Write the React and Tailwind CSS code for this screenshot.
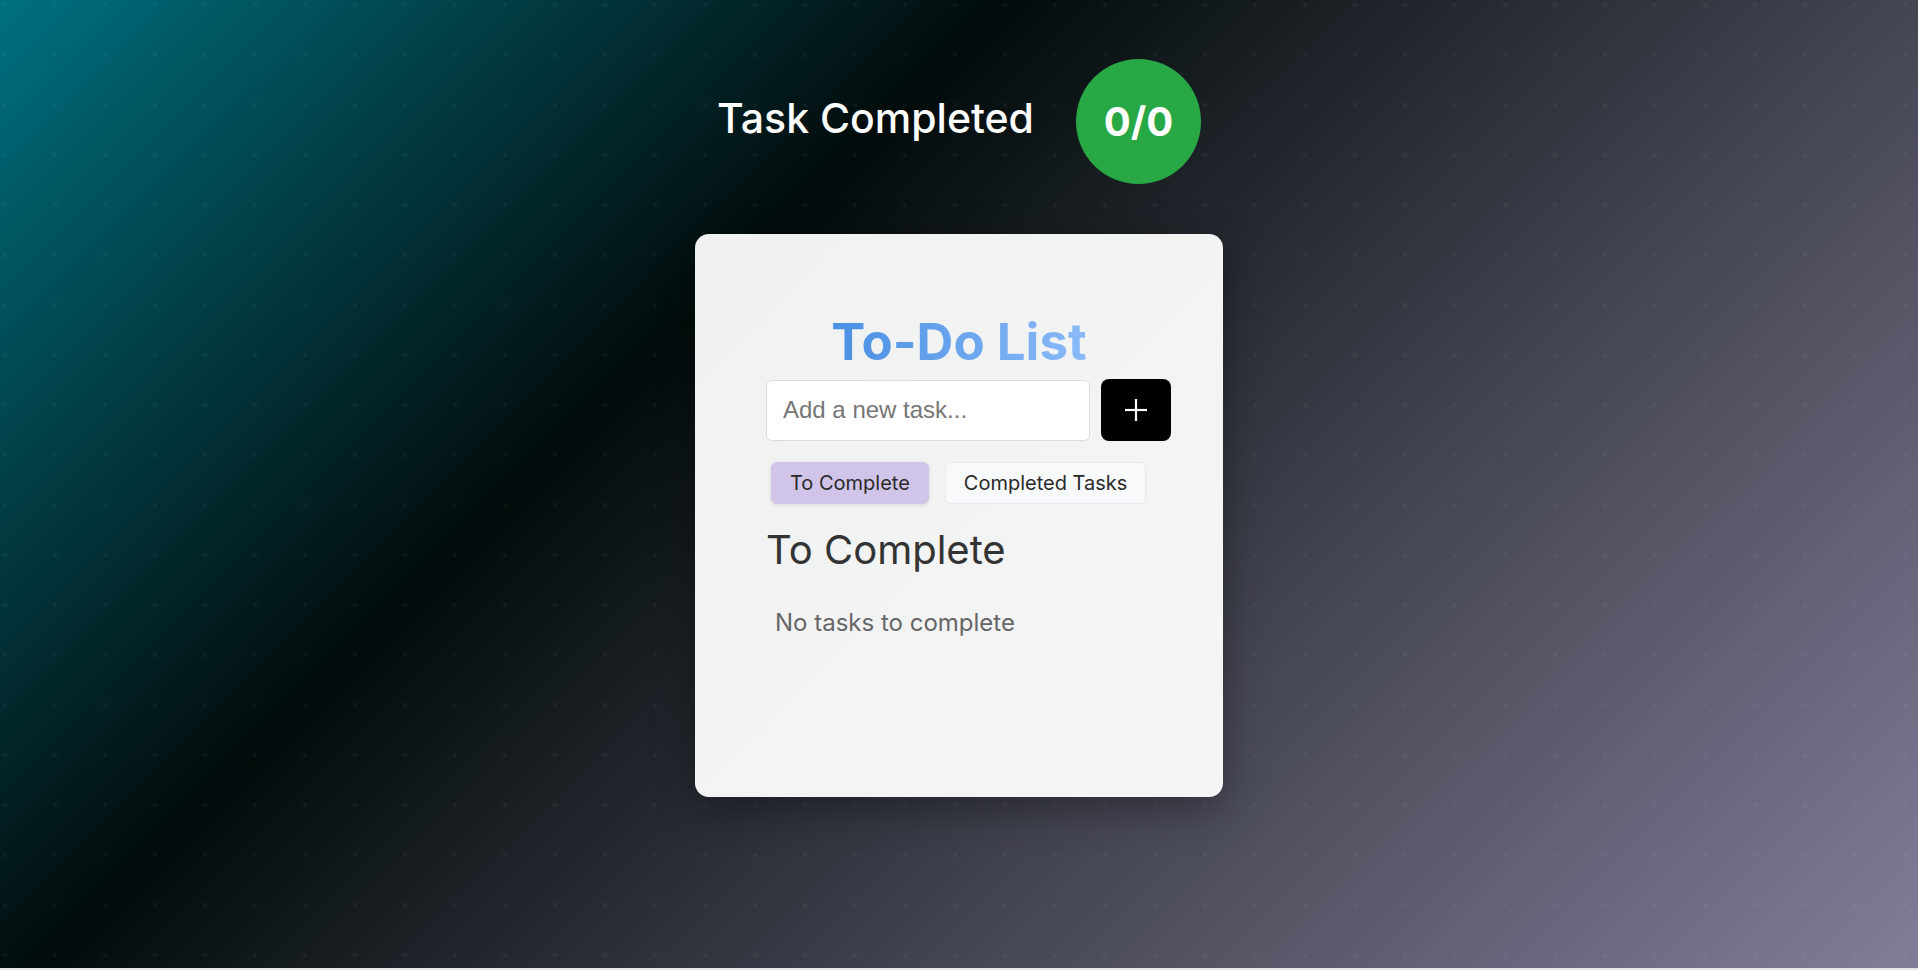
import { useState } from 'react'

function PlusIcon() {
  return (
    <svg width="24" height="24" viewBox="0 0 24 24" fill="none" stroke="white" strokeWidth="2.2" strokeLinecap="butt">
      <line x1="1" y1="12" x2="23" y2="12"/>
      <line x1="12" y1="1" x2="12" y2="23"/>
    </svg>
  )
}

export default function App() {
  const [tab, setTab] = useState('todo')
  const [text, setText] = useState('')
  const tasks = []
  const done = tasks.filter(t => t.done).length

  return (
    <div className="bg-[#e6e6e9] h-[970px] font-['Inter',sans-serif]">
      <div className="h-[968px] flex flex-col items-center bg-[image:radial-gradient(circle,rgba(255,255,255,0.04)_2px,transparent_2.5px),linear-gradient(135deg,#00707f_0%,#030b0b_35%,#41434f_65%,#817d99_100%)] bg-[size:50px_50px,100%_100%] bg-[position:-20px_-20px,0_0]">
        {/* header */}
        <div className="flex items-center gap-[42px] pt-[59px]">
          <h2 className="text-[41px] leading-none font-medium text-white mb-[6px]">Task Completed</h2>
          <div className="w-[125px] h-[125px] rounded-full bg-[#28a745] flex items-center justify-center">
            <span className="text-[40px] leading-none font-bold text-white">{done}/{tasks.length}</span>
          </div>
        </div>

        {/* card */}
        <div className="mt-[50px] w-[528px] h-[563px] rounded-[14px] bg-[linear-gradient(135deg,#f0f1f1,#f5f5f5)] shadow-[0_12px_40px_rgba(0,0,0,0.35)] pt-[82px]">
          <h1 className="text-center text-[51px] leading-none font-bold">
            <span className="bg-[linear-gradient(90deg,#4a8fe3,#8abaf8)] bg-clip-text text-transparent">To-Do List</span>
          </h1>

          <div className="pl-[71px]">
            <div className="flex items-center mt-[12px]">
              <input
                value={text}
                onChange={e => setText(e.target.value)}
                placeholder="Add a new task..."
                className="w-[324px] h-[61px] rounded-[6px] border border-[#dcdcdc] bg-white px-4 text-[24px] font-['Liberation_Sans',Arial,sans-serif] text-[#333] placeholder:text-[#767676] outline-none"
              />
              <button className="ml-[11px] w-[70px] h-[62px] rounded-[8px] bg-black flex items-center justify-center">
                <PlusIcon/>
              </button>
            </div>

            <div className="flex items-center gap-[16px] mt-[21px] ml-[5px]">
              <button
                onClick={() => setTab('todo')}
                className={tab === 'todo'
                  ? 'h-[42px] px-[18px] rounded-[6px] border border-[#d1c4e9] bg-[#d1c4e9] text-[20px] text-[#2a2a2a] shadow-[0_1px_4px_rgba(0,0,0,0.12)]'
                  : 'h-[42px] px-[18px] rounded-[6px] border border-[#e6e8eb] bg-[#f8f9fa] text-[20px] text-[#2a2a2a]'}>
                To Complete
              </button>
              <button
                onClick={() => setTab('done')}
                className={tab === 'done'
                  ? 'h-[42px] px-[18px] rounded-[6px] border border-[#d1c4e9] bg-[#d1c4e9] text-[20px] text-[#2a2a2a] shadow-[0_1px_4px_rgba(0,0,0,0.12)]'
                  : 'h-[42px] px-[18px] rounded-[6px] border border-[#e6e8eb] bg-[#f8f9fa] text-[20px] text-[#2a2a2a]'}>
                Completed Tasks
              </button>
            </div>

            <h3 className="mt-[26px] text-[40px] leading-none text-[#333]">
              {tab === 'todo' ? 'To Complete' : 'Completed Tasks'}
            </h3>
            <p className="mt-[41px] pl-[9px] text-[24px] leading-none text-[#666]">
              {tab === 'todo' ? 'No tasks to complete' : 'No completed tasks'}
            </p>
          </div>
        </div>
      </div>
    </div>
  )
}
